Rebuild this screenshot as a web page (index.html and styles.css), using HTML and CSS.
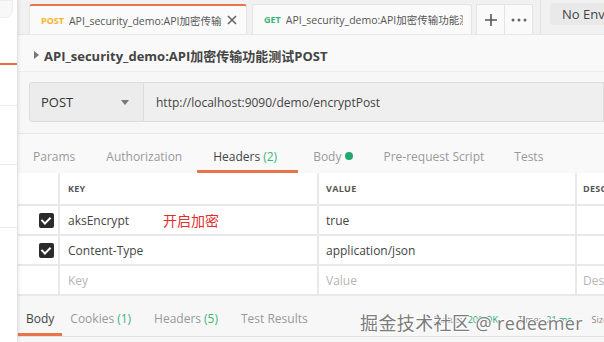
FILE: index.html
```html
<!DOCTYPE html>
<html lang="zh">
<head>
    <meta charset="UTF-8">
    <title>Postman</title>
    <link rel="stylesheet" href="styles.css">
</head>
<body>
    <div class="app">
        <div class="sidebar">
            <div class="side-knob"></div>
            <div class="side-active"></div>
            <div class="side-row r1"></div>
            <div class="side-row r2"></div>
            <div class="side-row r3"></div>
        </div>
        <div class="main">
            <div class="tabbar">
                <div class="tab active">
                    <span class="method post">POST</span>
                    <span class="tab-name">API_security_demo:API加密传输功能测试POST</span>
                    <svg class="tab-close" width="12" height="12" viewBox="0 0 12 12"><path d="M2 2L10 10M10 2L2 10" stroke="#666" stroke-width="1.6"/></svg>
                </div>
                <div class="tab">
                    <span class="method get">GET</span>
                    <span class="tab-name">API_security_demo:API加密传输功能测试GET</span>
                </div>
                <div class="tab-btn">
                    <svg width="14" height="14" viewBox="0 0 14 14"><path d="M7 1V13M1 7H13" stroke="#555" stroke-width="1.6"/></svg>
                </div>
                <div class="tab-btn">
                    <svg width="16" height="4" viewBox="0 0 16 4"><circle cx="2" cy="2" r="1.5" fill="#666"/><circle cx="8" cy="2" r="1.5" fill="#666"/><circle cx="14" cy="2" r="1.5" fill="#666"/></svg>
                </div>
                <div class="divider"></div>
                <div class="env">No Environment</div>
            </div>

            <div class="title-row">
                <span class="caret"></span>
                <span class="title">API_security_demo:API加密传输功能测试POST</span>
            </div>

            <div class="request-bar">
                <div class="method-select">
                    <span>POST</span>
                    <span class="arrow"></span>
                </div>
                <div class="url">http://localhost:9090/demo/encryptPost</div>
            </div>

            <div class="req-tabs">
                <span class="rtab">Params</span>
                <span class="rtab">Authorization</span>
                <span class="rtab on">Headers <em>(2)</em></span>
                <span class="rtab">Body <i class="dot"></i></span>
                <span class="rtab">Pre-request Script</span>
                <span class="rtab">Tests</span>
            </div>

            <div class="table">
                <div class="row head">
                    <div class="cell chk"></div>
                    <div class="cell key">KEY</div>
                    <div class="cell val">VALUE</div>
                    <div class="cell desc">DESCRIPTION</div>
                </div>
                <div class="row">
                    <div class="cell chk"><span class="box"></span></div>
                    <div class="cell key">aksEncrypt <span class="note">开启加密</span></div>
                    <div class="cell val">true</div>
                    <div class="cell desc"></div>
                </div>
                <div class="row">
                    <div class="cell chk"><span class="box"></span></div>
                    <div class="cell key">Content-Type</div>
                    <div class="cell val">application/json</div>
                    <div class="cell desc"></div>
                </div>
                <div class="row">
                    <div class="cell chk"></div>
                    <div class="cell key ph">Key</div>
                    <div class="cell val ph">Value</div>
                    <div class="cell desc ph">Description</div>
                </div>
            </div>

            <div class="resp">
                <span class="ptab on">Body</span>
                <span class="ptab">Cookies <em>(1)</em></span>
                <span class="ptab">Headers <em>(5)</em></span>
                <span class="ptab">Test Results</span>
                <div class="meta">
                    <span>Status: <em>200 OK</em></span>
                    <span>Time: <em>21 ms</em></span>
                    <span>Size</span>
                </div>
                <div class="watermark">掘金技术社区 @ redeemer</div>
            </div>
        </div>
    </div>
</body>
</html>
```

FILE: styles.css
```css
body {
    margin: 0;
    font-family: "Open Sans", "Noto Sans CJK SC", sans-serif;
    color: #505050;
    background: #f7f7f7;
}
.app {
    display: flex;
    width: 604px;
    height: 342px;
    overflow: hidden;
}
.sidebar {
    width: 17px;
    flex-shrink: 0;
    background: #fff;
    border-right: 1px solid #e2e2e2;
    box-shadow: 1px 0 3px rgba(0,0,0,0.08);
    position: relative;
    z-index: 1;
}
.side-knob {
    width: 12px;
    height: 16px;
    border: 1px solid #eee;
    border-left: none;
    border-radius: 0 0 8px 0;
    background: #f8f8f8;
}
.side-active {
    margin-top: 45px;
    height: 2px;
    background: #f06a35;
}
.side-row {
    height: 1px;
    background: #ebebeb;
}
.r1 { margin-top: 40px; }
.r2 { margin-top: 58px; }
.r3 { margin-top: 62px; }
.main {
    flex: 1;
    min-width: 0;
    display: flex;
    flex-direction: column;
}
.tabbar {
    height: 35px;
    flex-shrink: 0;
    display: flex;
    align-items: flex-end;
    padding-left: 11px;
    background: #f1f1f1;
    border-bottom: 1px solid #e6e6e6;
    box-sizing: border-box;
    overflow: hidden;
}
.tabbar > * {
    flex-shrink: 0;
}
.tab {
    width: 220px;
    height: 30px;
    box-sizing: border-box;
    display: flex;
    align-items: center;
    padding: 0 8px 0 11px;
    margin-right: 4px;
    background: #fafafa;
    border: 1px solid #e4e4e4;
    border-bottom: none;
    border-radius: 3px 3px 0 0;
    font-size: 10.5px;
    white-space: nowrap;
    overflow: hidden;
}
.tab.active {
    width: 218px;
    margin-right: 5px;
    border-top: 2px solid #e8754a;
}
.method {
    font-weight: 700;
    font-size: 9px;
    margin-right: 5px;
}
.post { color: #f5b32a; }
.get { color: #3ab57c; }
.tab-name {
    flex: 1;
    overflow: hidden;
    color: #555;
}
.tab-close {
    margin-left: 4px;
    flex-shrink: 0;
}
.tab-btn {
    width: 29px;
    height: 30px;
    box-sizing: border-box;
    display: flex;
    align-items: center;
    justify-content: center;
    background: #fafafa;
    border: 1px solid #e4e4e4;
    border-bottom: none;
    margin-right: -1px;
}
.divider {
    align-self: stretch;
    width: 1px;
    margin: 0 9px 0 8px;
    background: #e2e2e2;
}
.env {
    align-self: flex-start;
    margin-top: 3px;
    height: 22px;
    line-height: 22px;
    padding-left: 12px;
    width: 120px;
    background: #e9e9e9;
    border-radius: 3px;
    font-size: 13px;
    color: #444;
    white-space: nowrap;
}
.title-row {
    height: 37px;
    box-sizing: border-box;
    flex-shrink: 0;
    display: flex;
    align-items: center;
    padding: 4px 0 0 16px;
    border-bottom: 1px solid #ececec;
    background: #f9f9f9;
}
.caret {
    width: 0;
    height: 0;
    border-top: 4px solid transparent;
    border-bottom: 4px solid transparent;
    border-left: 5px solid #777;
    margin-right: 5px;
}
.title {
    font-size: 13px;
    font-weight: 700;
    color: #444;
    white-space: nowrap;
}
.request-bar {
    display: flex;
    height: 40px;
    margin: 10px 0 0 11px;
    flex-shrink: 0;
}
.method-select {
    width: 115px;
    box-sizing: border-box;
    display: flex;
    align-items: center;
    justify-content: space-between;
    padding: 0 14px 0 11px;
    background: #ececec;
    border: 1px solid #dcdcdc;
    border-radius: 3px 0 0 3px;
    font-size: 13px;
    color: #333;
}
.arrow {
    border-left: 4px solid transparent;
    border-right: 4px solid transparent;
    border-top: 5px solid #777;
}
.url {
    flex: 1;
    display: flex;
    align-items: center;
    padding-left: 12px;
    background: #efefef;
    border: 1px solid #dcdcdc;
    border-left: none;
    font-size: 12px;
    color: #444;
    white-space: nowrap;
}
.req-tabs {
    height: 40px;
    box-sizing: border-box;
    flex-shrink: 0;
    margin-top: 11px;
    padding-top: 8px;
    display: flex;
    align-items: stretch;
    border-top: 1px solid #e8e8e8;
    background: #f9f9f9;
    font-size: 12px;
    color: #999;
}
.rtab {
    display: flex;
    align-items: center;
    padding: 0 15px;
    white-space: nowrap;
    border-bottom: 3px solid transparent;
}
.rtab:first-child {
    padding-right: 16px;
}
.rtab.on {
    color: #444;
    border-bottom-color: #e8754a;
    padding: 0 21px 0 16px;
}
em {
    font-style: normal;
    color: #3ab57c;
    margin-left: 3px;
}
.dot {
    width: 8px;
    height: 8px;
    border-radius: 50%;
    background: #1fa971;
    margin-left: 4px;
}
.table {
    flex-shrink: 0;
    background: #e9e9e9;
    display: flex;
    flex-direction: column;
    gap: 2px;
    padding-bottom: 2px;
}
.row {
    display: flex;
    gap: 2px;
    height: 28px;
}
.row.head {
    height: 31px;
}
.cell {
    background: #fff;
    display: flex;
    align-items: center;
    font-size: 12px;
    color: #444;
    white-space: nowrap;
    overflow: hidden;
}
.head .cell {
    font-size: 9px;
    font-weight: 700;
    color: #555;
    letter-spacing: 0.3px;
}
.chk {
    width: 40px;
    flex-shrink: 0;
    justify-content: flex-end;
    padding-right: 4px;
    box-sizing: border-box;
}
.key {
    width: 257px;
    flex-shrink: 0;
    box-sizing: border-box;
    padding-left: 8px;
}
.val {
    width: 256px;
    flex-shrink: 0;
    box-sizing: border-box;
    padding-left: 7px;
}
.desc {
    flex: 1;
    padding-left: 6px;
}
.ph {
    color: #b5b5b5;
}
.box {
    width: 15px;
    height: 15px;
    border-radius: 2px;
    background: #2b2b2b;
    position: relative;
}
.box::after {
    content: "";
    position: absolute;
    left: 4px;
    top: 2px;
    width: 4px;
    height: 7px;
    border: solid #fff;
    border-width: 0 2px 2px 0;
    transform: rotate(45deg);
}
.note {
    color: #e0302e;
    font-size: 14px;
    margin-left: 34px;
}
.resp {
    flex: 1;
    display: flex;
    align-items: stretch;
    padding-top: 7px;
    border-bottom: 1px solid #e2e2e2;
    position: relative;
    font-size: 12px;
    color: #999;
    margin-bottom: 5px;
}
.ptab {
    display: flex;
    align-items: center;
    padding: 0 8px;
    white-space: nowrap;
    border-bottom: 3px solid transparent;
}
.ptab + .ptab + .ptab {
    margin-left: 7px;
}
.ptab.on {
    color: #444;
    border-bottom-color: #e8754a;
}
.meta {
    margin-left: auto;
    display: flex;
    align-items: center;
    gap: 20px;
    font-size: 9px;
    color: #888;
    white-space: nowrap;
    margin-right: -4px;
}
.meta em {
    color: #1fa971;
}
.watermark {
    position: absolute;
    left: 342px;
    top: 13px;
    font-size: 18px;
    letter-spacing: 0.4px;
    color: #7c7c7c;
    white-space: nowrap;
    text-shadow: -1px 0 #fff, 1px 0 #fff, 0 -1px #fff, 0 1px #fff;
}
```
